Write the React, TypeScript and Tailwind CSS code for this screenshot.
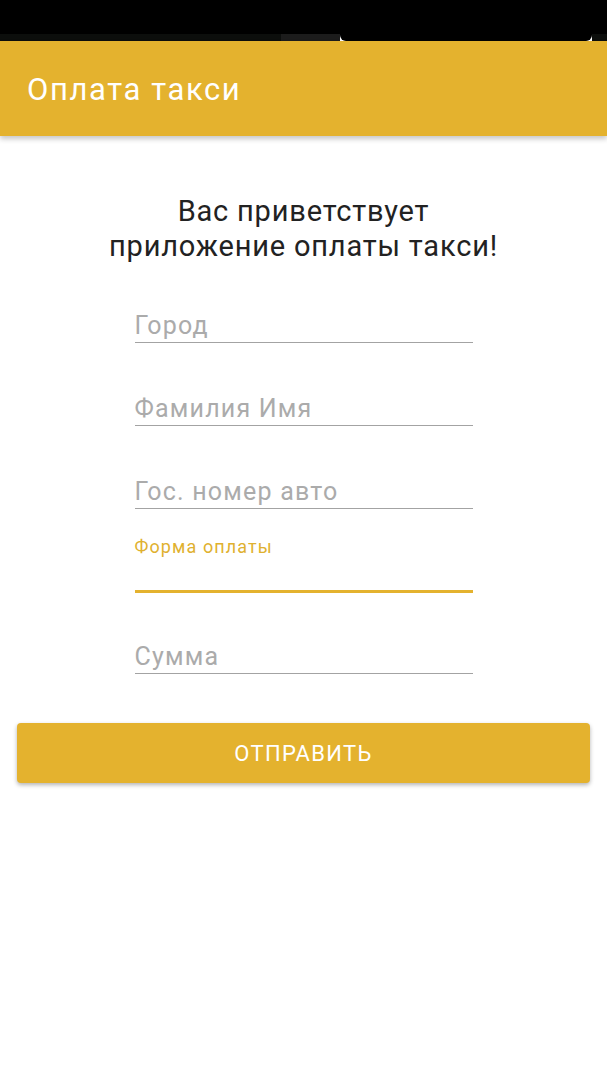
import React from 'react';

const font = { fontFamily: 'Roboto, "Noto Sans", sans-serif' };

function Field({ label }: { label: string }) {
  return (
    <div className="border-b border-[#a3a3a3] pt-[2px] pb-[2px]">
      <div className="h-[28px] text-[25px] leading-[28px] tracking-[1.2px] text-[#ababab]">{label}</div>
    </div>
  );
}

export default function App() {
  return (
    <div className="w-[607px] h-[1080px] bg-white flex flex-col" style={font}>
      {/* status bar */}
      <div className="h-[34px] bg-black" />
      <div className="h-[7px] flex">
        <div className="w-[281px] bg-[#0c0e0c]" />
        <div className="w-[59px] bg-[#1c1c1c]" />
        <div className="w-[252px] bg-black rounded-b-[6px]" />
        <div className="flex-1 bg-[#0c0e0c]" />
      </div>

      {/* app bar */}
      <header className="relative z-10 h-[95px] bg-[#e4b22e] shadow-[0_3px_5px_rgba(0,0,0,0.22)] flex items-center px-[27px]">
        <h1 className="text-[31px] leading-none text-white tracking-[1.6px] pt-[1px]">Оплата такси</h1>
      </header>

      <main className="flex flex-col">
        <p className="mt-[58px] text-center text-[29px] leading-[35px] tracking-[0.8px] text-[#222]">
          Вас приветствует
          <br />
          приложение оплаты такси!
        </p>

        <div className="w-[338px] mx-auto flex flex-col">
          <div className="mt-[46px]">
            <Field label="Город" />
          </div>
          <div className="mt-[50px]">
            <Field label="Фамилия Имя" />
          </div>
          <div className="mt-[50px]">
            <Field label="Гос. номер авто" />
          </div>
          <div className="mt-[27px]">
            <div className="text-[18px] leading-[22px] tracking-[1.1px] text-[#dfb12f]">Форма оплаты</div>
            <div className="h-[35px] border-b-[3px] border-[#e4b22e]" />
          </div>
          <div className="mt-[48px]">
            <Field label="Сумма" />
          </div>
        </div>

        <button className="mt-[49px] mx-[17px] h-[60px] rounded-[4px] bg-[#e4b22e] shadow-[0_2px_4px_rgba(0,0,0,0.3)] text-white text-[22px] uppercase tracking-[1.3px]">
          Отправить
        </button>
      </main>
    </div>
  );
}
